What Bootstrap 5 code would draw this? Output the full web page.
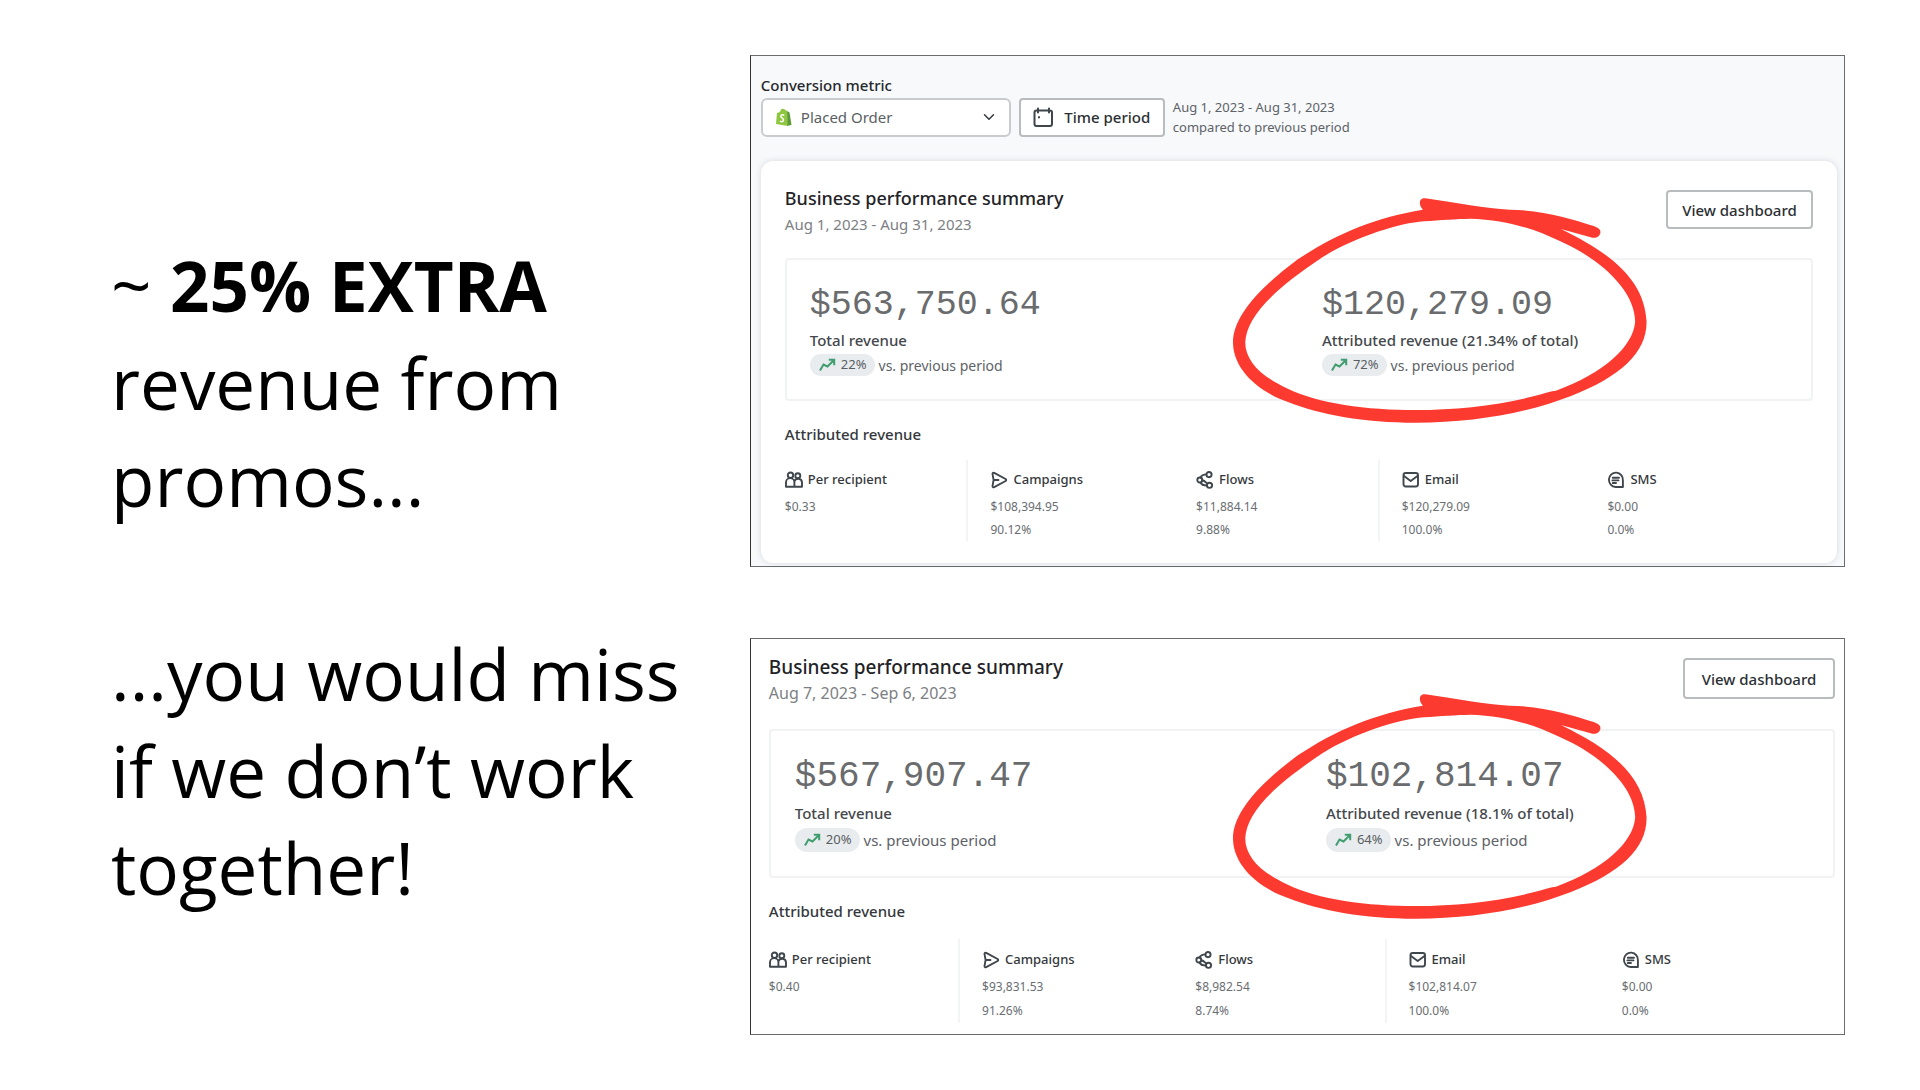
<!DOCTYPE html>
<html lang="en">
<head>
<meta charset="utf-8">
<meta name="viewport" content="width=device-width, initial-scale=1">
<title>Extra revenue from promos</title>
<link href="https://cdn.jsdelivr.net/npm/bootstrap@5.3.0/dist/css/bootstrap.min.css" rel="stylesheet">
<style>
  body { background: #fff; color: #24282c; font-family: "Noto Sans", "Open Sans", sans-serif; }
  .slide { display: grid; grid-template-columns: 7fr 12fr; padding: 55px 75px 54px 111px; }
  .pitch { padding: 181px 48px 0 0; color: #000; font-family: "Open Sans", "Noto Sans", sans-serif; font-size: 71px; line-height: 97px; }
  .pitch p { margin: 0 0 97px; }
  .pitch strong { font-size: 69px; }
  .shots { display: flex; flex-direction: column; gap: 71px; }

  .shot { border: 1px solid #6a6c6f; border-left-color: #333; position: relative; font-size: 13px;
    --title: 18px; --date: 15px; --money: 35px; --money-line: 42px; --label-line: 28px;
    --pill: 22px; --edge: 24px; --row: 23px; --head: 30px; --btn-w: 147px; --btn-h: 39px; }
  .shot-august { background: #f8f9fb; padding: 18px 7px 3px 10px; }
  .shot-september { padding: 14px 9px 11px 18px;
    --title: 19px; --date: 16px; --money: 36px; --money-line: 43px; --label-line: 30px;
    --pill: 24px; --edge: 25px; --row: 24px; --head: 31px; --btn-w: 152px; --btn-h: 41px; }

  .metric-label { font-size: 15px; line-height: 22px; font-weight: 500; display: block; }
  .controls { gap: 8px; margin: 1px 0 24px; }
  .metric-box { position: relative; width: 250px; }
  .metric-box svg { position: absolute; left: 14px; top: 10px; }
  .metric-box .form-select { height: 39px; padding: 0 36px 0 38px; border: 2px solid #c9cccf; border-radius: 6px; color: #5a5f64; font-size: 15px; background-position: right 12px center; }
  .tool-btn { height: var(--btn-h); padding: 0; background: #fff; border: 2px solid #b9bcbf; border-radius: 4px; color: #2b2f33; font-size: 15px; font-weight: 500; line-height: 20px; }
  .period-btn { width: 146px; gap: 10px; }
  .view-btn { width: var(--btn-w); margin-top: 6px; }
  .shot-september .view-btn { margin-top: 5px; }
  .range { color: #5d6267; line-height: 20px; }

  .summary-card { border: 0; border-radius: 12px; padding: 23px 24px 22px; box-shadow: 0 0 6px rgba(40,50,70,.16); }
  .summary-title { font-size: var(--title); line-height: 28px; font-weight: 500; margin: 0; color: #1f2327; }
  .summary-date { font-size: var(--date); line-height: 24px; margin: 0; color: #7c8084; }
  .totals { margin-top: 22px; border: 2px solid #f1f2f3; border-radius: 4px; padding: var(--edge) 0 calc(var(--edge) - 1px); }
  .shot-september .totals { margin-top: 24px; padding-top: 24px; }
  .total { flex: 1 1 0; padding-left: calc(var(--edge) - 1px); font-size: 15px; }
  .money { font-family: "Liberation Mono", monospace; font-size: var(--money); line-height: var(--money-line); color: #696b6d; }
  .money-label { line-height: var(--label-line); font-weight: 500; color: #44484c; }
  .delta { height: var(--pill); gap: 4px; font-size: 14px; color: #5d6267; }
  .shot-september .delta { font-size: 15px; }
  .pill { height: var(--pill); border-radius: 12px; background: #e9ecef; padding: 0 8px 0 9px; gap: 5px; font-size: 13px; color: #5a5e62; }
  .by-channel { font-size: 15px; line-height: 24px; font-weight: 500; margin: 21px 0 14px; color: #34383c; }
  .shot-september .by-channel { margin-bottom: 16px; }
  .channel { flex: 1 1 0; position: relative; padding-top: 5px; min-height: calc(5px + var(--head) + 2 * var(--row)); color: #6a6e72; font-size: 12px; line-height: var(--row); }
  .channel.split::before { content: ""; position: absolute; left: -24px; top: 0; bottom: 0; width: 2px; background: #f3f4f5; }
  .channel-name { height: var(--head); gap: 5px; color: #34383c; font-size: 13px; font-weight: 500; margin: 0; }
  .ico { fill: none; stroke: #3f464c; stroke-width: 1.9; stroke-linejoin: round; stroke-linecap: round; flex: none; }
  .trend { fill: none; stroke: #3f9d70; stroke-width: 2; }
  .ring { position: absolute; left: 44.1%; width: 414px; height: 225px; fill: #fc3a30; pointer-events: none; }
  .shot-august .ring { top: 142px; }
  .shot-september .ring { top: 55px; }
</style>
<script src="https://cdn.jsdelivr.net/npm/bootstrap@5.3.0/dist/js/bootstrap.bundle.min.js"></script>
</head>
<body>
<svg width="0" height="0" class="position-absolute" aria-hidden="true">
  <symbol id="i-people" viewBox="0 0 18 18"><circle cx="5.500" cy="4.200" r="2.700"/><circle cx="12.800" cy="4.800" r="2.500"/><path d="M1 15.800V11.300a4.200 4.200 0 0 1 8.400 0V15.800ZM9.400 15.800H17V11.300a3.900 3.900 0 0 0-7.600-.8"/></symbol>
  <symbol id="i-send" viewBox="0 0 18 18"><path d="M2.500 2.800 Q2.600 1.200 4.200 1.800 L15.600 8 Q16.800 9 15.600 10 L4.200 16.200 Q2.600 16.800 2.500 15.200 L3.600 9ZM3.600 9H8.500"/></symbol>
  <symbol id="i-flow" viewBox="0 0 18 18"><circle cx="3.800" cy="9" r="2.500"/><circle cx="13" cy="3.600" r="2.600"/><circle cx="13.500" cy="14.300" r="2.600"/><path d="M4.500 6.500C5.500 4.500 7.500 3.400 10.300 3.400M4.500 11.500C5.500 13.500 7.500 14.600 10.800 14.500M6.300 9.200C8.500 9.500 9.500 11 11.200 12.600"/></symbol>
  <symbol id="i-mail" viewBox="0 0 18 18"><rect x="1.500" y="2" width="14.500" height="13.500" rx="2.200"/><path d="M2 5l6.700 5L15.500 5"/></symbol>
  <symbol id="i-chat" viewBox="0 0 18 18"><path d="M15.900 16H8.600A7 7.200 0 1 1 15.900 9.400ZM5.800 6.800H12M5.400 9.400H11.500M5.800 12H9"/></symbol>
  <symbol id="i-trend" viewBox="0 0 17 14"><path d="M1 12.500 4.500 6.500 8.500 8.500 14.500 2.500M9.800 1.800H15.200V7.200"/></symbol>
  <symbol id="i-ring" viewBox="32 53 1014 676" preserveAspectRatio="none"><path fill-rule="evenodd" d="M503 54C494 52 488 60 490 70C490 78 494 82 497 88C380 112 285 160 190 238C95 325 32 410 32 487C32 560 85 630 165 665C250 705 350 728 480 728C620 728 750 700 860 648C980 590 1045 520 1045 425C1040 300 960 220 835 146L908 171C920 176 932 168 932 155C932 146 925 142 915 137C860 115 790 90 710 88C650 84 580 68 503 54ZM613 115C700 118 770 145 835 184C930 235 1017 330 1017 425C1012 500 940 580 823 632C810 633 800 638 780 645C690 675 580 690 480 690C360 690 240 670 165 625C100 590 62 540 62 487C65 410 130 330 250 232C330 170 440 128 500 123C540 119 580 116 613 115Z"/></symbol>
</svg>

<main class="slide">
  <section class="pitch">
    <p>~ <strong>25% EXTRA</strong> revenue from promos...</p>
    <p class="mb-0">...you would miss if we don’t work together!</p>
  </section>

  <div class="shots">
    <section class="shot shot-august">
      <label class="metric-label" for="metric">Conversion metric</label>
      <div class="controls d-flex align-items-center">
        <div class="metric-box">
          <select class="form-select" id="metric"><option>Placed Order</option></select>
          <svg width="17" height="19" viewBox="0 0 17 19" aria-hidden="true"><path fill="#8ec63f" d="M2 5 5 4Q6 0 9 1L12 3 13 18 1 16Z"/><path fill="#5c9a35" d="M12 3 14.500 4.500 16.500 16.800 12.500 18Z"/><path fill="none" stroke="#fff" stroke-width="1.500" d="M9.300 7.200Q6 6 5.800 8.300C5.800 10 8.700 10 8.500 12.200 8.200 14.300 6 13.800 4.800 13"/></svg>
        </div>
        <button type="button" class="btn tool-btn period-btn d-flex align-items-center justify-content-center">
          <svg class="ico" width="21" height="21" viewBox="0 0 21 21" aria-hidden="true"><path stroke-width="2" d="M5 3.500H3.500Q1.500 3.500 1.500 5.500V17Q1.500 19 3.500 19H17Q19 19 19 17V5.500Q19 3.500 17 3.500H16M5 1.500V5.500M16 1.500V5.500M5 3.500H16M6 10V10.500"/></svg>
          Time period
        </button>
        <div class="range">Aug 1, 2023 - Aug 31, 2023<br>compared to previous period</div>
      </div>

      <div class="card summary-card">
        <div class="d-flex justify-content-between align-items-start">
          <div>
            <h2 class="summary-title">Business performance summary</h2>
            <p class="summary-date">Aug 1, 2023 - Aug 31, 2023</p>
          </div>
          <button type="button" class="btn tool-btn view-btn">View dashboard</button>
        </div>
        <div class="totals d-flex">
          <div class="total">
            <div class="money">$563,750.64</div>
            <div class="money-label">Total revenue</div>
            <div class="delta d-flex align-items-center"><span class="pill d-flex align-items-center"><svg class="trend" width="17" height="14"><use href="#i-trend"/></svg>22%</span>vs. previous period</div>
          </div>
          <div class="total">
            <div class="money">$120,279.09</div>
            <div class="money-label">Attributed revenue (21.34% of total)</div>
            <div class="delta d-flex align-items-center"><span class="pill d-flex align-items-center"><svg class="trend" width="17" height="14"><use href="#i-trend"/></svg>72%</span>vs. previous period</div>
          </div>
        </div>
        <h3 class="by-channel">Attributed revenue</h3>
        <div class="d-flex">
          <div class="channel"><h4 class="channel-name d-flex align-items-center"><svg class="ico" width="18" height="18"><use href="#i-people"/></svg>Per recipient</h4>$0.33</div>
          <div class="channel split"><h4 class="channel-name d-flex align-items-center"><svg class="ico" width="18" height="18"><use href="#i-send"/></svg>Campaigns</h4>$108,394.95<br>90.12%</div>
          <div class="channel"><h4 class="channel-name d-flex align-items-center"><svg class="ico" width="18" height="18"><use href="#i-flow"/></svg>Flows</h4>$11,884.14<br>9.88%</div>
          <div class="channel split"><h4 class="channel-name d-flex align-items-center"><svg class="ico" width="18" height="18"><use href="#i-mail"/></svg>Email</h4>$120,279.09<br>100.0%</div>
          <div class="channel"><h4 class="channel-name d-flex align-items-center"><svg class="ico" width="18" height="18"><use href="#i-chat"/></svg>SMS</h4>$0.00<br>0.0%</div>
        </div>
      </div>
      <svg class="ring" aria-hidden="true"><use href="#i-ring"/></svg>
    </section>

    <section class="shot shot-september">
      <div class="d-flex justify-content-between align-items-start">
        <div>
          <h2 class="summary-title">Business performance summary</h2>
          <p class="summary-date">Aug 7, 2023 - Sep 6, 2023</p>
        </div>
        <button type="button" class="btn tool-btn view-btn">View dashboard</button>
      </div>
      <div class="totals d-flex">
        <div class="total">
          <div class="money">$567,907.47</div>
          <div class="money-label">Total revenue</div>
          <div class="delta d-flex align-items-center"><span class="pill d-flex align-items-center"><svg class="trend" width="17" height="14"><use href="#i-trend"/></svg>20%</span>vs. previous period</div>
        </div>
        <div class="total">
          <div class="money">$102,814.07</div>
          <div class="money-label">Attributed revenue (18.1% of total)</div>
          <div class="delta d-flex align-items-center"><span class="pill d-flex align-items-center"><svg class="trend" width="17" height="14"><use href="#i-trend"/></svg>64%</span>vs. previous period</div>
        </div>
      </div>
      <h3 class="by-channel">Attributed revenue</h3>
      <div class="d-flex">
        <div class="channel"><h4 class="channel-name d-flex align-items-center"><svg class="ico" width="18" height="18"><use href="#i-people"/></svg>Per recipient</h4>$0.40</div>
        <div class="channel split"><h4 class="channel-name d-flex align-items-center"><svg class="ico" width="18" height="18"><use href="#i-send"/></svg>Campaigns</h4>$93,831.53<br>91.26%</div>
        <div class="channel"><h4 class="channel-name d-flex align-items-center"><svg class="ico" width="18" height="18"><use href="#i-flow"/></svg>Flows</h4>$8,982.54<br>8.74%</div>
        <div class="channel split"><h4 class="channel-name d-flex align-items-center"><svg class="ico" width="18" height="18"><use href="#i-mail"/></svg>Email</h4>$102,814.07<br>100.0%</div>
        <div class="channel"><h4 class="channel-name d-flex align-items-center"><svg class="ico" width="18" height="18"><use href="#i-chat"/></svg>SMS</h4>$0.00<br>0.0%</div>
      </div>
      <svg class="ring" aria-hidden="true"><use href="#i-ring"/></svg>
    </section>
  </div>
</main>
</body>
</html>
